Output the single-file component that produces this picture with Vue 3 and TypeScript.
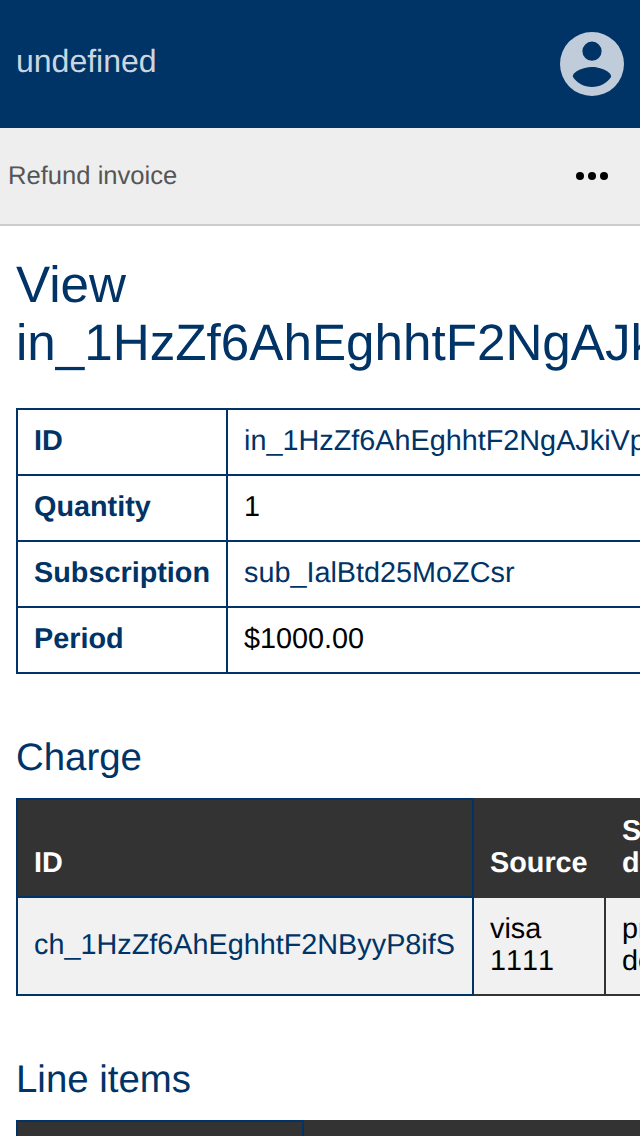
<script setup lang="ts">
interface DetailRow {
  label: string
  value: string
  link: boolean
}

const invoiceId = 'in_1HzZf6AhEghhtF2NgAJkiVpB'

const details: DetailRow[] = [
  { label: 'ID', value: invoiceId, link: true },
  { label: 'Quantity', value: '1', link: false },
  { label: 'Subscription', value: 'sub_IalBtd25MoZCsr', link: true },
  { label: 'Period', value: '$1000.00', link: false },
]
</script>

<template>
  <div class="page">
    <header class="topbar">
      <span class="brand">undefined</span>
      <svg class="account" viewBox="2 2 20 20" aria-label="Account">
        <path
          fill-rule="evenodd"
          d="M12 2a10 10 0 1 0 0 20a10 10 0 0 0 0-20zm0 3a3 3 0 1 1 0 6a3 3 0 0 1 0-6zm0 14.2c-2.5 0-4.71-1.28-6-3.22c.03-1.99 4-3.08 6-3.08s5.97 1.09 6 3.08c-1.29 1.94-3.5 3.22-6 3.22z"
        />
      </svg>
    </header>
    <nav class="navbar">
      <a class="nav-link">Refund invoice</a>
      <svg class="more" viewBox="0 0 32 8" aria-label="More">
        <circle cx="4" cy="4" r="4" />
        <circle cx="16" cy="4" r="4" />
        <circle cx="28" cy="4" r="4" />
      </svg>
    </nav>
    <main class="content">
      <h1>View<br />{{ invoiceId }}</h1>
      <table class="details">
        <colgroup>
          <col class="label-col" />
          <col class="value-col" />
        </colgroup>
        <tbody>
          <tr v-for="row in details" :key="row.label">
            <th>{{ row.label }}</th>
            <td><a v-if="row.link">{{ row.value }}</a><template v-else>{{ row.value }}</template></td>
          </tr>
        </tbody>
      </table>

      <h2>Charge</h2>
      <table class="list">
        <colgroup>
          <col class="charge-id" />
          <col class="source" />
          <col class="descriptor" />
        </colgroup>
        <thead>
          <tr>
            <th>ID</th>
            <th>Source</th>
            <th>Statement<br />descriptor</th>
          </tr>
        </thead>
        <tbody>
          <tr>
            <td><a>ch_1HzZf6AhEghhtF2NByyP8ifS</a></td>
            <td>visa<br /><span class="digits">1111</span></td>
            <td>product<br />description</td>
          </tr>
        </tbody>
      </table>

      <h2>Line items</h2>
      <table class="list">
        <colgroup>
          <col class="item-id" />
          <col class="item-plan" />
        </colgroup>
        <thead>
          <tr>
            <th><br />ID</th>
            <th>Plan</th>
          </tr>
        </thead>
      </table>
    </main>
  </div>
</template>

<style>
html,
body {
  margin: 0;
  overflow: hidden;
}
</style>

<style scoped>
.page {
  width: 100%;
  height: 1136px;
  overflow: hidden;
  background: #fff;
  color: #000;
  font: 28.8px/32px 'Liberation Sans', Arial, sans-serif;
  text-rendering: geometricPrecision;
}

.topbar {
  display: flex;
  align-items: center;
  justify-content: space-between;
  box-sizing: border-box;
  height: 128px;
  padding: 0 16px;
  background: #036;
}

.brand {
  padding-bottom: 6px;
  color: #ccd6e0;
  font-size: 32px;
  line-height: 36px;
}

.account {
  width: 64px;
  height: 64px;
  fill: #c0ccd9;
}

.navbar {
  display: flex;
  align-items: center;
  justify-content: space-between;
  box-sizing: border-box;
  height: 98px;
  padding: 0 32px 0 8px;
  border-bottom: 2px solid #ccc;
  background: #eee;
}

.nav-link {
  font-size: 25.6px;
}

.more {
  width: 32px;
  height: 8px;
}

.content {
  padding: 30px 16px 0;
}

h1,
h2 {
  margin: 0;
  color: #036;
  font-weight: 400;
  white-space: nowrap;
}

h1 {
  margin-bottom: 36px;
  font-size: 51.2px;
  line-height: 58px;
}

h2 {
  margin: 61px 0 17px;
  font-size: 38.4px;
  line-height: 46px;
}

table {
  width: 0;
  border-collapse: collapse;
  table-layout: fixed;
}

th,
td {
  padding: 15px 16px 17px;
  border: 2px solid #333;
  text-align: left;
  white-space: nowrap;
}

a {
  color: #036;
}

.nav-link {
  color: #555;
}

.digits {
  font-kerning: none;
}

.details th,
.details td {
  border-color: #036;
}

.details th {
  color: #036;
}

.label-col {
  width: 210px;
}

.value-col {
  width: 460px;
}

.list th {
  background: #333;
  color: #fff;
  vertical-align: bottom;
}

.list td {
  background: #f1f1f1;
}

.list th:first-child,
.list td:first-child {
  border-color: #036;
}

.charge-id {
  width: 456px;
}

.source {
  width: 132px;
}

.descriptor {
  width: 190px;
}

.item-id {
  width: 286px;
}

.item-plan {
  width: 500px;
}
</style>
